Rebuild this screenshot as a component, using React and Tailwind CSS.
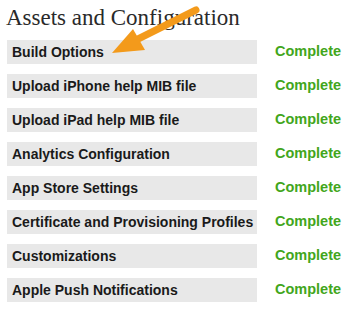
import React from "react";

const rows = [
  "Build Options",
  "Upload iPhone help MIB file",
  "Upload iPad help MIB file",
  "Analytics Configuration",
  "App Store Settings",
  "Certificate and Provisioning Profiles",
  "Customizations",
  "Apple Push Notifications",
];

export default function App() {
  return (
    <div className="relative w-[354px] h-[317px] bg-white overflow-hidden">
      <div
        className="h-[40px] pl-[6px] pt-[4px] text-[23px] leading-[28px] text-[#2a2a2a]"
        style={{ fontFamily: '"Liberation Serif", Georgia, serif' }}
      >
        Assets and Configuration
      </div>
      <div
        className="flex flex-col gap-[10px]"
        style={{ fontFamily: '"Liberation Sans", Arial, sans-serif' }}
      >
        {rows.map((r) => (
          <div key={r} className="flex items-center">
            <div className="ml-[7px] w-[250px] h-[24px] bg-[#e8e8e8] pl-[5px] flex items-center text-[14px] font-bold text-[#1a1a1a]">
              {r}
            </div>
            <div className="ml-[18px] text-[14.5px] font-bold text-[#42a61c]">
              Complete
            </div>
          </div>
        ))}
      </div>
      <svg
        className="absolute left-0 top-0"
        width="354"
        height="317"
        viewBox="0 0 354 317"
      >
        <line
          x1="196"
          y1="10"
          x2="132"
          y2="42"
          stroke="#f39a1b"
          strokeWidth="7"
          strokeLinecap="round"
        />
        <polygon points="112,53 133,29 145,50" fill="#f39a1b" />
      </svg>
    </div>
  );
}
